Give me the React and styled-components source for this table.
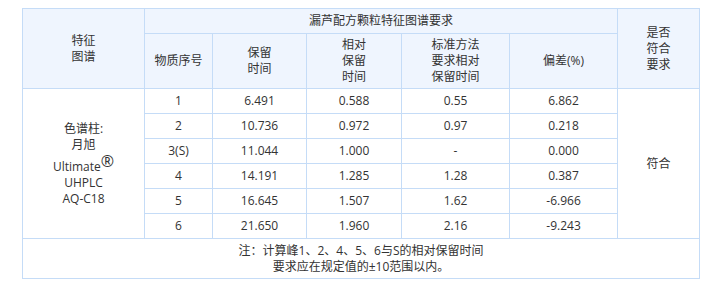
import styled, { createGlobalStyle } from "styled-components";

const Global = createGlobalStyle`
    body {
        margin: 0;
        background: #fff;
        font-family: "Open Sans", "Noto Sans CJK SC", sans-serif;
        color: #333;
    }
`

const Page = styled.div`
    padding: 8px 0 0 22px;
`

const Table = styled.table`
    border-collapse: collapse;
    table-layout: fixed;
    width: 677px;
    font-size: 12px;
    line-height: 16px;
`

const Col = styled.col`
    width: ${p => p.$w}px;
`

const Head = styled.th`
    background: #eff5fe;
    border: 1px solid #c5dcf7;
    font-weight: normal;
    text-align: center;
    vertical-align: middle;
    padding: 0 4px;
    height: ${p => p.$h || 24}px;
`

const Cell = styled.td`
    border: 1px solid #c5dcf7;
    text-align: center;
    vertical-align: middle;
    padding: 0 4px;
    height: 24px;
`

const Note = styled(Cell)`
    height: 39px;
`

const Mark = styled.sup`
    font-size: 16px;
    line-height: 16px;
    vertical-align: 4px;
`

const widths = [122, 68, 94, 95, 108, 108, 82]

const rows = [
    ["1", "6.491", "0.588", "0.55", "6.862"],
    ["2", "10.736", "0.972", "0.97", "0.218"],
    ["3(S)", "11.044", "1.000", "-", "0.000"],
    ["4", "14.191", "1.285", "1.28", "0.387"],
    ["5", "16.645", "1.507", "1.62", "-6.966"],
    ["6", "21.650", "1.960", "2.16", "-9.243"],
]

const App = () => {
    return (
        <Page>
            <Global />
            <Table>
                <colgroup>
                    {widths.map((w, i) => <Col key={i} $w={w} />)}
                </colgroup>
                <thead>
                    <tr>
                        <Head rowSpan={2}>特征<br />图谱</Head>
                        <Head colSpan={5}>漏芦配方颗粒特征图谱要求</Head>
                        <Head rowSpan={2}>是否<br />符合<br />要求</Head>
                    </tr>
                    <tr>
                        <Head $h={54}>物质序号</Head>
                        <Head $h={54}>保留<br />时间</Head>
                        <Head $h={54}>相对<br />保留<br />时间</Head>
                        <Head $h={54}>标准方法<br />要求相对<br />保留时间</Head>
                        <Head $h={54}>偏差(%)</Head>
                    </tr>
                </thead>
                <tbody>
                    {rows.map((r, i) => (
                        <tr key={i}>
                            {i === 0 && (
                                <Cell rowSpan={6}>
                                    色谱柱:<br />月旭<br />Ultimate<Mark>®</Mark><br />UHPLC<br />AQ-C18
                                </Cell>
                            )}
                            {r.map((v, j) => <Cell key={j}>{v}</Cell>)}
                            {i === 0 && <Cell rowSpan={6}>符合</Cell>}
                        </tr>
                    ))}
                    <tr>
                        <Note colSpan={7}>
                            注：计算峰1、2、4、5、6与S的相对保留时间<br />
                            要求应在规定值的±10范围以内。
                        </Note>
                    </tr>
                </tbody>
            </Table>
        </Page>
    )
}

export default App;
